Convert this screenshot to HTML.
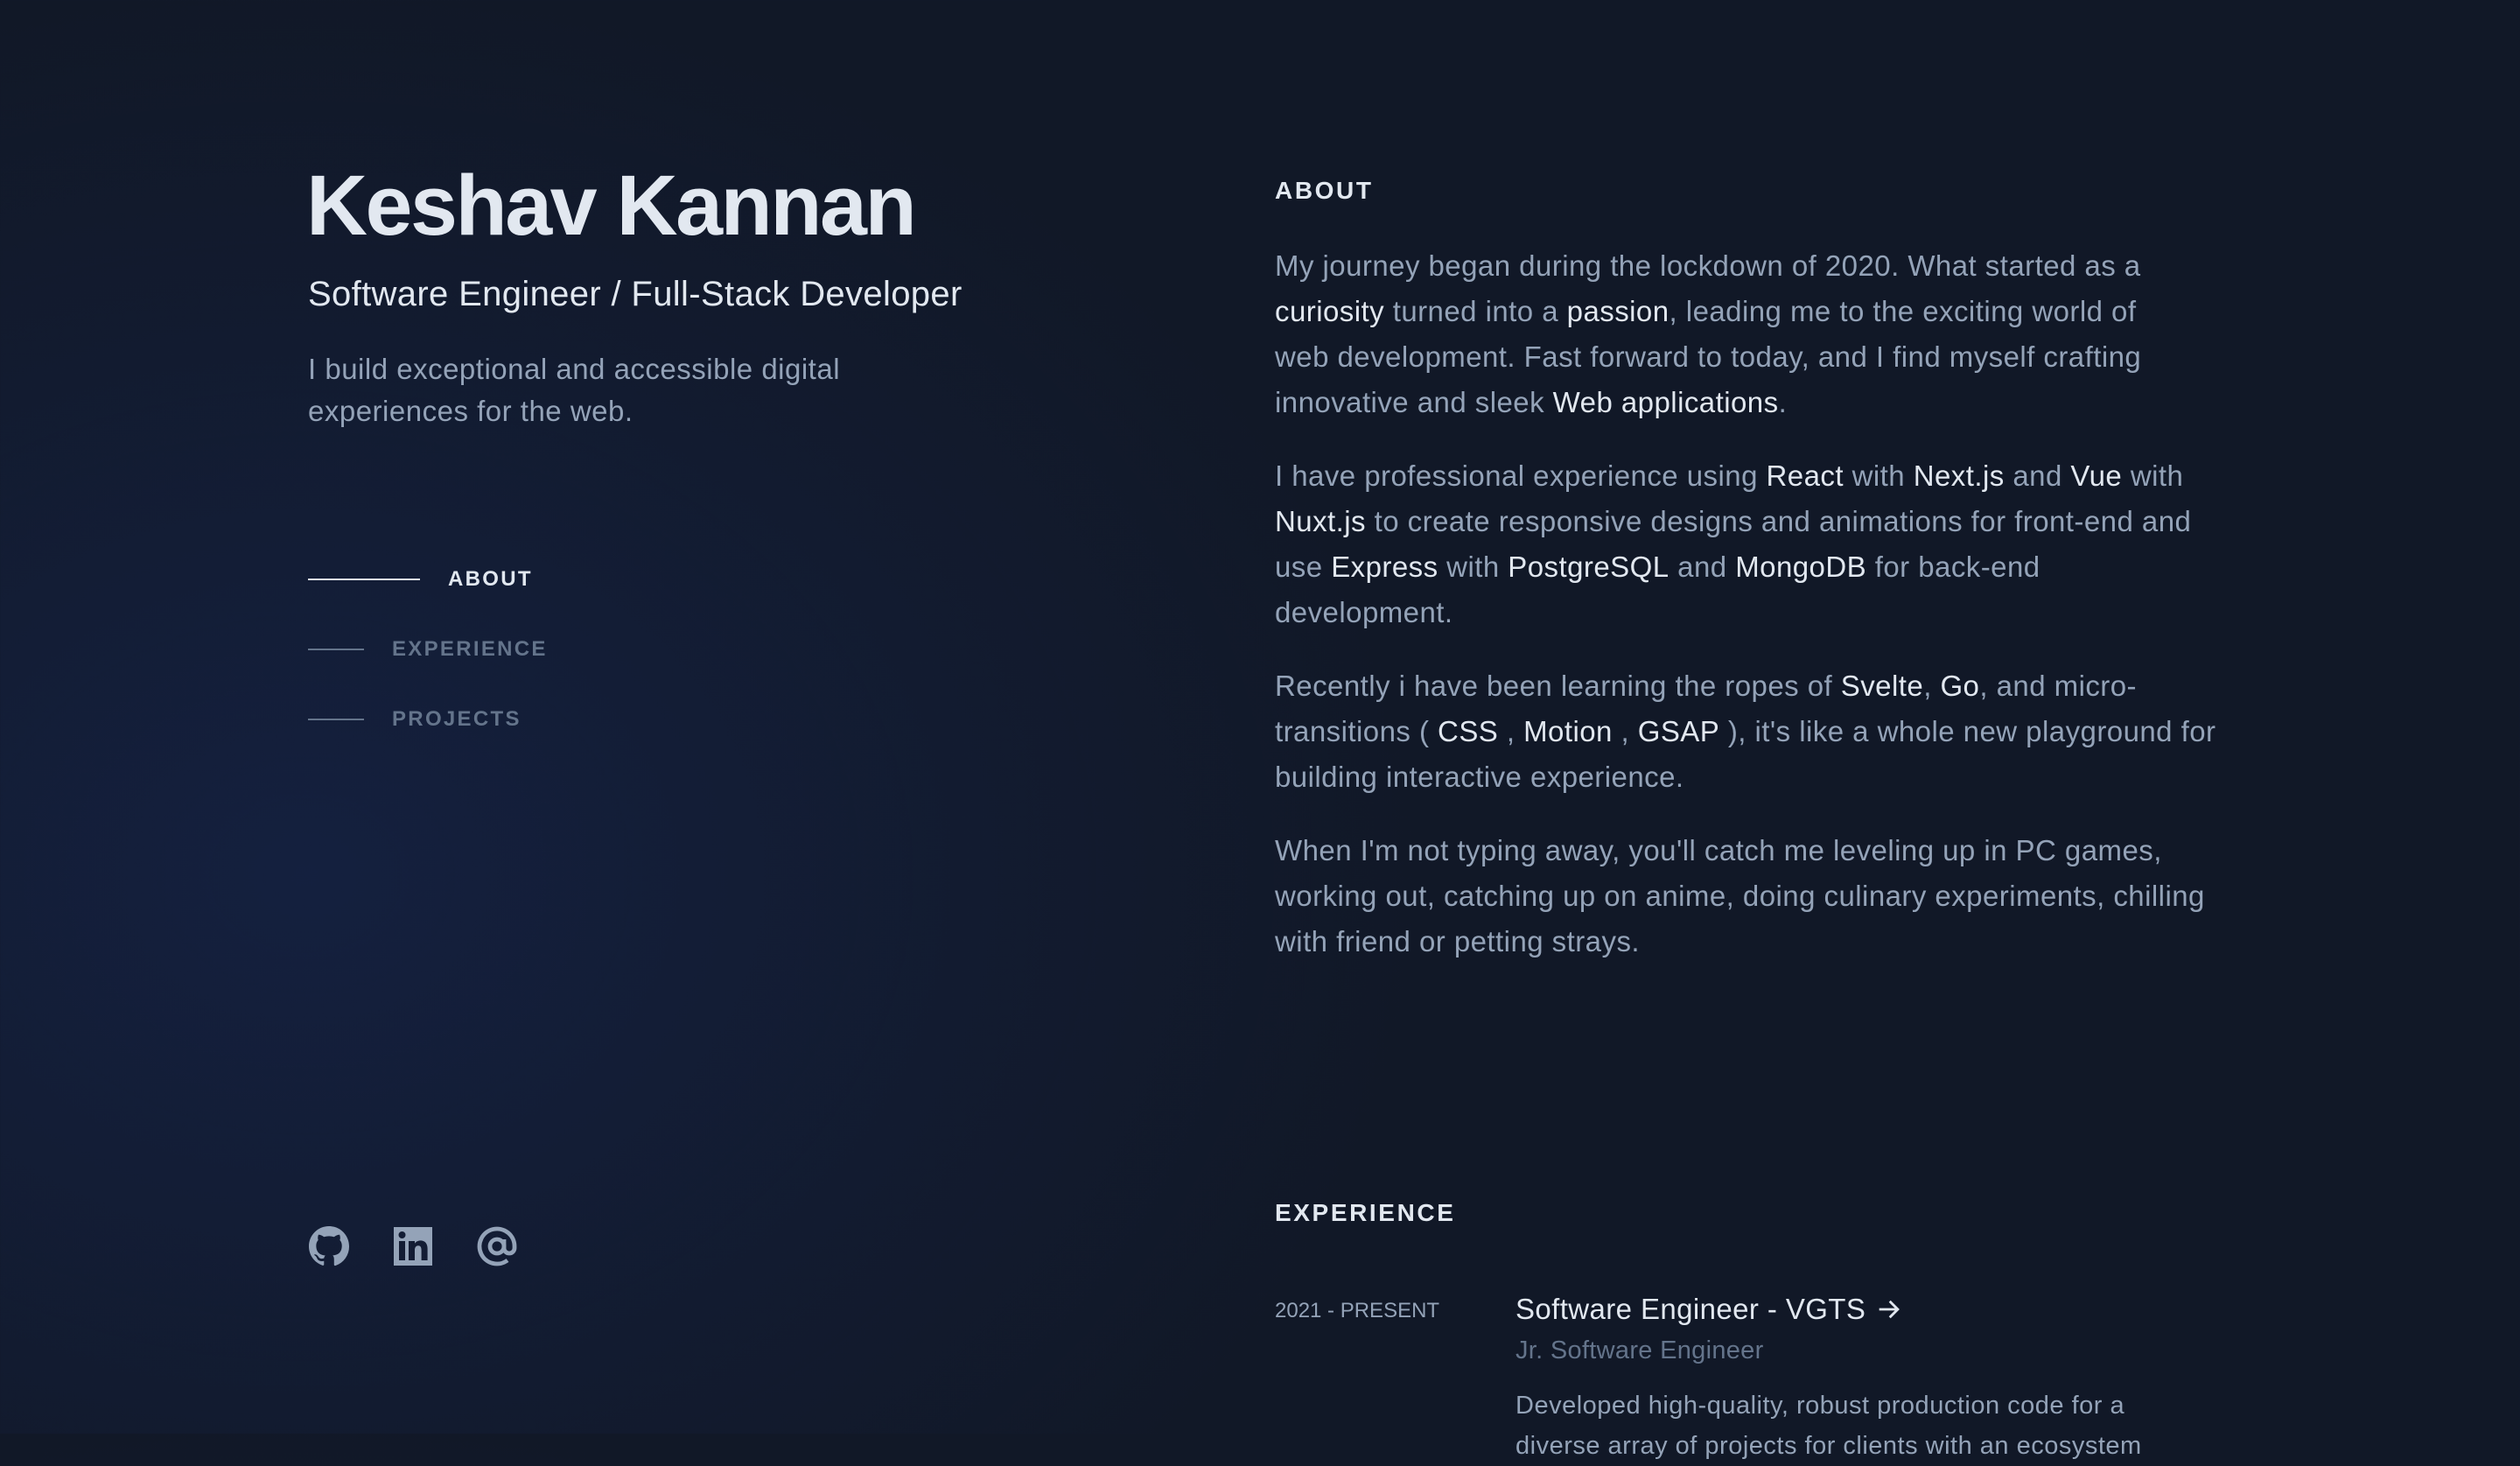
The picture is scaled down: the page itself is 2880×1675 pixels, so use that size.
<!DOCTYPE html>
<html><head><meta charset="utf-8"><style>
html,body{margin:0;padding:0}
body{width:2880px;height:1638px;overflow:hidden;position:relative;font-family:"Liberation Sans",sans-serif;
background:radial-gradient(ellipse 1500px 1200px at 350px 1000px, rgba(30,58,138,0.24), rgba(30,58,138,0.08) 55%, rgba(30,58,138,0) 85%),#111827;color:#94a3b8}
.abs{position:absolute;white-space:nowrap}
h1{position:absolute;left:350px;top:186px;margin:0;font-size:97px;font-weight:700;letter-spacing:-2.5px;color:#e2e8f0;line-height:1}
.sub{left:352px;top:314px;font-size:40px;color:#e2e8f0;letter-spacing:0.35px}
.desc{left:352px;top:398px;font-size:33px;line-height:48px;color:#94a3b8;letter-spacing:0.5px}
.nav{left:352px;font-size:24px;font-weight:700;letter-spacing:2.3px;display:flex;align-items:center}
.nav i{display:inline-block;height:2px;background:#64748b;margin-right:32px}
.h2{left:1457px;font-size:28px;font-weight:700;letter-spacing:2.6px;color:#e2e8f0}
.p{left:1457px;font-size:33px;line-height:52px;color:#94a3b8;letter-spacing:0.45px}
.p b{font-weight:500;color:#e2e8f0}
</style></head><body>
<h1>Keshav Kannan</h1>
<div class="abs sub">Software Engineer / Full-Stack Developer</div>
<div class="abs desc">I build exceptional and accessible digital<br>experiences for the web.</div>
<div class="abs nav" style="top:648px;color:#e2e8f0"><i style="width:128px;background:#e2e8f0"></i>ABOUT</div>
<div class="abs nav" style="top:728px;color:#64748b"><i style="width:64px"></i>EXPERIENCE</div>
<div class="abs nav" style="top:808px;color:#64748b"><i style="width:64px"></i>PROJECTS</div>

<svg class="abs" style="left:352px;top:1400px" width="48" height="48" viewBox="0 0 24 24" fill="#94a3b8"><path d="M12 .5C5.65.5.5 5.65.5 12c0 5.08 3.29 9.39 7.86 10.91.57.1.78-.25.78-.55v-2c-3.2.7-3.870-1.36-3.87-1.36-.52-1.33-1.28-1.68-1.28-1.68-1.04-.71.08-.7.08-.7 1.150.08 1.76 1.18 1.76 1.18 1.030 1.76 2.7 1.25 3.35.96.1-.75.4-1.25.73-1.54-2.55-.29-5.24-1.28-5.24-5.680 0-1.25.45-2.28 1.18-3.08-.12-.29-.51-1.46.11-3.04 0 0 .97-.31 3.17 1.18a11 11 0 0 1 5.77 0c2.2-1.49 3.17-1.18 3.17-1.18.62 1.58.23 2.75.11 3.04.74.8 1.18 1.83 1.18 3.08 0 4.41-2.69 5.38-5.25 5.67.41.36.78 1.06.78 2.14v3.17c0 .31.21.66.79.55A11.5 11.5 0 0 0 23.5 12C23.5 5.65 18.35.5 12 .5z"/></svg>
<svg class="abs" style="left:448px;top:1400px" width="48" height="48" viewBox="0 0 24 24" fill="#94a3b8"><path d="M1 1h22v22H1z M4 9v11h3.5V9z M5.75 3.5a2 2 0 1 0 0 4 2 2 0 1 0 0-4z M9.5 9v11H13v-5.8c0-1.5.6-2.6 2-2.6s1.8 1.1 1.8 2.6V20h3.5v-6.6c0-3.2-1.7-4.7-4-4.7-1.8 0-2.8 1-3.3 1.7V9z" fill-rule="evenodd"/></svg>
<svg class="abs" style="left:544px;top:1400px" width="48" height="48" viewBox="0 0 24 24" fill="none" stroke="#94a3b8" stroke-width="2.4"><circle cx="12" cy="12" r="4"/><path d="M16 8v5a3 3 0 0 0 6 0v-1a10 10 0 1 0-4 8"/></svg>

<div class="abs h2" style="top:202px">ABOUT</div>
<div class="abs p" style="top:278px">My journey began during the lockdown of 2020. What started as a<br><b>curiosity</b> turned into a <b>passion</b>, leading me to the exciting world of<br>web development. Fast forward to today, and I find myself crafting<br>innovative and sleek <b>Web applications</b>.</div>
<div class="abs p" style="top:518px">I have professional experience using <b>React</b> with <b>Next.js</b> and <b>Vue</b> with<br><b>Nuxt.js</b> to create responsive designs and animations for front-end and<br>use <b>Express</b> with <b>PostgreSQL</b> and <b>MongoDB</b> for back-end<br>development.</div>
<div class="abs p" style="top:758px">Recently i have been learning the ropes of <b>Svelte</b>, <b>Go</b>, and micro-<br>transitions ( <b>CSS</b> , <b>Motion</b> , <b>GSAP</b> ), it's like a whole new playground for<br>building interactive experience.</div>
<div class="abs p" style="top:946px">When I'm not typing away, you'll catch me leveling up in PC games,<br>working out, catching up on anime, doing culinary experiments, chilling<br>with friend or petting strays.</div>

<div class="abs h2" style="top:1370px">EXPERIENCE</div>
<div class="abs" style="left:1457px;top:1484px;font-size:24px;color:#94a3b8">2021 - PRESENT</div>
<div class="abs" style="left:1732px;top:1477px;font-size:33px;color:#e2e8f0;letter-spacing:0.4px">Software Engineer - VGTS <svg width="34" height="34" viewBox="0 0 24 24" fill="none" stroke="#e2e8f0" stroke-width="2" style="vertical-align:-6px"><path d="M4 12h15M12.5 5.5l6.5 6.5-6.5 6.5"/></svg></div>
<div class="abs" style="left:1732px;top:1527px;font-size:29px;color:#64748b;letter-spacing:0.3px">Jr. Software Engineer</div>
<div class="abs" style="left:1732px;top:1583px;font-size:29px;line-height:46px;color:#94a3b8;letter-spacing:0.5px">Developed high-quality, robust production code for a<br>diverse array of projects for clients with an ecosystem</div>
</body></html>
